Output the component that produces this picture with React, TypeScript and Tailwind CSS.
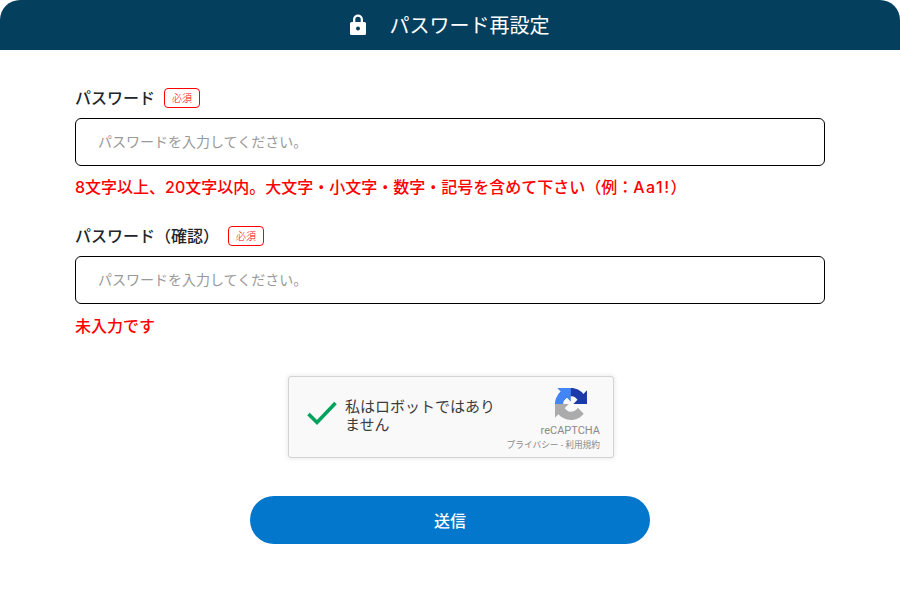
import React from "react";

const font = { fontFamily: '"Inter", "Noto Sans CJK JP", sans-serif' };

function Field({ label, error, errorClass }: { label: string; error: React.ReactNode; errorClass: string }) {
  return (
    <div className="flex flex-col">
      <div className="flex items-center h-[20px] gap-[9px]">
        <span className="text-[16px] leading-[20px] font-medium text-[#212529]">{label}</span>
        <span className="flex items-center justify-center w-[36px] h-[20px] rounded-[4px] border border-[#ff0000] text-[10px] font-light leading-none text-[#ff0000] bg-white">必須</span>
      </div>
      <input
        readOnly
        placeholder="パスワードを入力してください。"
        className="mt-[10px] h-[48px] w-full rounded-[6px] border border-black bg-white pl-[22px] pr-3 pb-[2px] text-[14px] outline-none placeholder:text-[#999999]"
      />
      <p className={errorClass}>{error}</p>
    </div>
  );
}

function Recaptcha() {
  return (
    <div className="ml-[2px] relative flex h-[82px] w-[326px] items-start rounded-[3px] border border-[#d3d3d3] bg-[#f9f9f9] shadow-[0_0_4px_1px_rgba(0,0,0,0.08)]" style={{ fontFamily: '"Roboto", "Noto Sans CJK JP", sans-serif' }}>
      <svg className="ml-[17px] mt-[23px] shrink-0" width="32" height="26" viewBox="0 0 32 26">
        <path d="M2.5 14 L11 22.5 L29.5 3" fill="none" stroke="#00a35c" strokeWidth="3.6" />
      </svg>
      <div className="ml-[7px] mt-[21px] w-[160px] text-[15px] leading-[18px] text-[#3c3c3c]">私はロボットではありません</div>
      <div className="ml-auto mr-[13px] mt-[11px] flex flex-col items-end">
        <svg className="mr-[13px]" width="32" height="32" viewBox="0 0 64 64">
          <path d="M64 31.955l-.033-1.37V4.687l-7.16 7.16C50.948 4.674 42.033.093 32.05.093c-10.4 0-19.622 4.96-25.458 12.64l11.736 11.86c1.15-2.127 2.784-3.955 4.77-5.33 2.05-1.6 4.952-2.908 8.95-2.908.484 0 .858.057 1.133.163 4.954.39 9.248 3.124 11.777 7.09l-8.307 8.307c10.522-.04 22.408-.066 27.35.08" fill="#1c3aa9" />
          <path d="M31.862.094l-1.37.033H4.594l7.16 7.16C4.58 13.147 0 22.06 0 32.046c0 10.4 4.96 19.622 12.64 25.458l11.86-11.736c-2.127-1.15-3.955-2.784-5.33-4.77-1.6-2.05-2.908-4.952-2.908-8.95 0-.484.057-.858.163-1.133.39-4.954 3.124-9.248 7.09-11.777l8.307 8.307c-.04-10.522-.066-22.408.08-27.35" fill="#4285f4" />
          <path d="M.001 32.045l.033 1.37v25.898l7.16-7.16c5.86 7.173 14.774 11.754 24.76 11.754 10.4 0 19.622-4.96 25.458-12.64l-11.736-11.86c-1.15 2.127-2.784 3.955-4.77 5.33-2.05 1.6-4.952 2.908-8.95 2.908-.484 0-.858-.057-1.133-.163-4.954-.39-9.248-3.124-11.777-7.09l8.307-8.307c-10.522.04-22.408.066-27.35-.08" fill="#ababab" />
        </svg>
        <div className="mt-[5px] text-[11px] leading-[12px] text-[#8a8a8a]">reCAPTCHA</div>
        <div className="mt-[3px] text-[8.7px] leading-[11px] text-[#8a8a8a] whitespace-nowrap">プライバシー - 利用規約</div>
      </div>
    </div>
  );
}

export default function App() {
  return (
    <div className="h-[603px] w-[900px] bg-white" style={font}>
      <header className="flex h-[50px] items-center justify-center rounded-t-[20px] bg-[#053f5e] text-white">
        <svg className="mr-[23px]" width="18" height="22" viewBox="0 0 18 22">
          <path fill="#fff" fillRule="evenodd" d="M4 8V5.5a5 5 0 0 1 10 0V8h1.5A1.5 1.5 0 0 1 17 9.5v10a1.5 1.5 0 0 1-1.5 1.5h-13A1.5 1.5 0 0 1 1 19.5v-10A1.5 1.5 0 0 1 2.5 8H4Zm2.3 0h5.4V5.5a2.7 2.7 0 0 0-5.4 0V8ZM9 12.5a2 2 0 1 0 0 4 2 2 0 0 0 0-4Z" />
        </svg>
        <h1 className="text-[20px] font-normal leading-none mr-[2px] pt-[2px]">パスワード再設定</h1>
      </header>
      <main className="flex flex-col px-[75px] pt-[38px]">
        <Field
          label="パスワード"
          errorClass="mt-[11px] text-[16px] leading-[20px] font-medium text-[#ff0000]"
          error={<>8文字以上、20文字以内。大文字・小文字・数字・記号を含めて下さい（例：<span className="tracking-[1.5px]">Aa1!</span>）</>}
        />
        <div className="mt-[29px]">
          <Field label="パスワード（確認）" errorClass="mt-[12px] text-[16px] leading-[20px] font-medium text-[#ff0000]" error="未入力です" />
        </div>
        <div className="mt-[40px] flex justify-center">
          <Recaptcha />
        </div>
        <button className="mx-auto mt-[38px] h-[48px] w-[400px] rounded-full bg-[#0277cc] pt-[1px] text-[16px] font-medium text-white">送信</button>
      </main>
    </div>
  );
}
